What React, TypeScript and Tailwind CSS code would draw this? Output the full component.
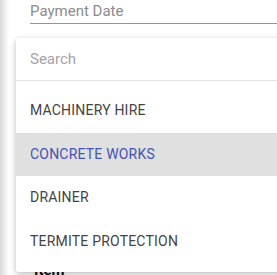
const items = ['MACHINERY HIRE', 'CONCRETE WORKS', 'DRAINER', 'TERMITE PROTECTION'];

export default function App() {
  const active = 'CONCRETE WORKS';

  return (
    <div
      className="relative flex w-[277px] h-[275px] overflow-hidden bg-white"
      style={{ fontFamily: 'Roboto, "Liberation Sans", sans-serif' }}
    >
      <div className="w-[9px] shrink-0 bg-gradient-to-r from-[#d9d9d9] to-white" />

      <div className="flex-1 pl-[21px] flex flex-col">
        <div className="pt-[1px] h-[24px] text-[15px] leading-[20px] text-[#8c8c8c] border-b border-[#949494]">
          Payment Date
        </div>
        <div className="mt-auto pl-[4px] text-[15px] font-bold leading-[18px] text-[#111] translate-y-[4px]">
          Item
        </div>
      </div>

      <div className="absolute left-[16px] top-[38px] w-[290px] rounded-[3px] bg-white shadow-[0_2px_6px_rgba(0,0,0,0.28)]">
        <div className="h-[43px] flex items-center pl-[14px] border-b border-[#e3e3e3] text-[15px] text-[#a3a3a8]">
          Search
        </div>
        <ul className="pt-[8px] pb-[9px]">
          {items.map((item) => (
            <li
              key={item}
              className={`h-[43.5px] flex items-center pl-[14px] text-[14px] tracking-[0.2px] ${
                item === active ? 'bg-[#e0e0e0] text-[#4553b5]' : 'text-[#444]'
              }`}
            >
              {item}
            </li>
          ))}
        </ul>
      </div>
    </div>
  );
}
